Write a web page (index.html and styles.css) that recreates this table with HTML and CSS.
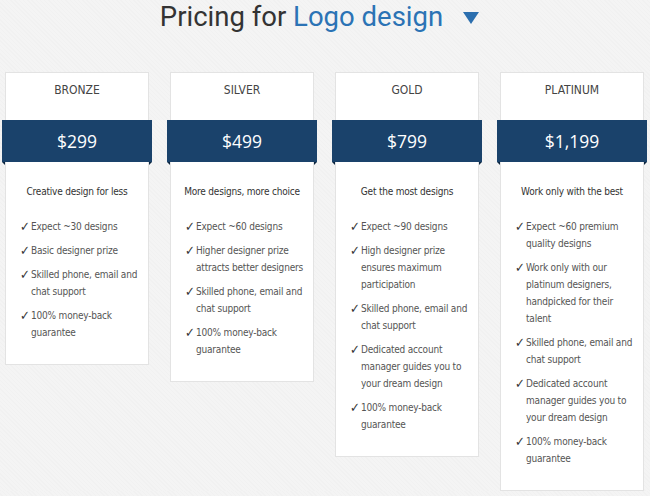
FILE: index.html
```html
<!DOCTYPE html>
<html lang="en">
<head>
<meta charset="utf-8">
<title>Pricing for Logo design</title>
<link rel="stylesheet" href="styles.css">
</head>
<body>
<header class="header">
  <h1 class="title">Pricing for <span class="title-accent">Logo design</span></h1>
  <svg class="caret" width="16" height="12" viewBox="0 0 16 12" aria-hidden="true"><path d="M0 0H16L8 12Z" fill="#2b6eae"/></svg>
</header>
<main class="plans">
  <section class="card">
    <div class="tier">BRONZE</div>
    <div class="ribbon">$299</div>
    <p class="desc">Creative design for less</p>
    <ul class="features">
      <li><span class="check">✓</span><span>Expect ~30 designs</span></li>
      <li><span class="check">✓</span><span>Basic designer prize</span></li>
      <li><span class="check">✓</span><span>Skilled phone, email and chat support</span></li>
      <li><span class="check">✓</span><span>100% money-back guarantee</span></li>
    </ul>
  </section>
  <section class="card">
    <div class="tier">SILVER</div>
    <div class="ribbon">$499</div>
    <p class="desc">More designs, more choice</p>
    <ul class="features">
      <li><span class="check">✓</span><span>Expect ~60 designs</span></li>
      <li><span class="check">✓</span><span>Higher designer prize attracts better designers</span></li>
      <li><span class="check">✓</span><span>Skilled phone, email and chat support</span></li>
      <li><span class="check">✓</span><span>100% money-back guarantee</span></li>
    </ul>
  </section>
  <section class="card">
    <div class="tier">GOLD</div>
    <div class="ribbon">$799</div>
    <p class="desc">Get the most designs</p>
    <ul class="features">
      <li><span class="check">✓</span><span>Expect ~90 designs</span></li>
      <li><span class="check">✓</span><span>High designer prize ensures maximum participation</span></li>
      <li><span class="check">✓</span><span>Skilled phone, email and chat support</span></li>
      <li><span class="check">✓</span><span>Dedicated account manager guides you to your dream design</span></li>
      <li><span class="check">✓</span><span>100% money-back guarantee</span></li>
    </ul>
  </section>
  <section class="card">
    <div class="tier">PLATINUM</div>
    <div class="ribbon">$1,199</div>
    <p class="desc">Work only with the best</p>
    <ul class="features">
      <li><span class="check">✓</span><span>Expect ~60 premium quality designs</span></li>
      <li><span class="check">✓</span><span>Work only with our platinum designers, handpicked for their talent</span></li>
      <li><span class="check">✓</span><span>Skilled phone, email and chat support</span></li>
      <li><span class="check">✓</span><span>Dedicated account manager guides you to your dream design</span></li>
      <li><span class="check">✓</span><span>100% money-back guarantee</span></li>
    </ul>
  </section>
</main>
</body>
</html>
```
FILE: styles.css
```css
* { box-sizing: border-box; }

body {
  margin: 0;
  background-color: #f4f4f4;
  background-image: repeating-linear-gradient(45deg, rgba(0,0,0,0.012) 0 1px, transparent 1px 3px);
  font-family: "DejaVu Sans Condensed", "DejaVu Sans", sans-serif;
  color: #555;
}

.header {
  display: flex;
  align-items: center;
  justify-content: center;
  gap: 20px;
  height: 34px;
  padding-right: 11px;
}

.title {
  margin: 0;
  font-family: Roboto, sans-serif;
  font-weight: 400;
  font-size: 27.5px;
  line-height: 34px;
  color: #333;
}

.title-accent { color: #2b73b5; }

.caret { display: block; margin-top: 2px; }

.plans {
  display: flex;
  align-items: flex-start;
  gap: 21px;
  padding: 38px 0 0 5px;
}

.card {
  width: 144px;
  flex: none;
  background: #fff;
  border: 1px solid #e3e3e3;
}

.tier {
  height: 47px;
  padding-top: 9px;
  text-align: center;
  font-size: 12px;
  line-height: 16px;
  color: #444;
}

.ribbon {
  position: relative;
  margin: 0 -4px;
  height: 42px;
  background: #1a426b;
  color: #fff;
  text-align: center;
  font-family: "Open Sans", sans-serif;
  font-size: 17.5px;
  line-height: 42px;
}

.ribbon::before,
.ribbon::after {
  content: "";
  position: absolute;
  bottom: -3px;
  border-top: 3px solid #0c2640;
}
.ribbon::before { left: 0; border-left: 3px solid transparent; }
.ribbon::after { right: 0; border-right: 3px solid transparent; }

.desc {
  margin: 21px 0 0;
  text-align: center;
  font-size: 10px;
  letter-spacing: -0.2px;
  line-height: 17px;
  color: #333;
}

.features {
  list-style: none;
  margin: 18px 0 0;
  padding: 0 8px 23px 14px;
  display: flex;
  flex-direction: column;
  gap: 7px;
  font-size: 10px;
  letter-spacing: -0.2px;
  line-height: 17px;
  color: #555;
}

.features li { display: flex; }

.check {
  flex: none;
  width: 11px;
  font-size: 13px;
  color: #333;
}
```
